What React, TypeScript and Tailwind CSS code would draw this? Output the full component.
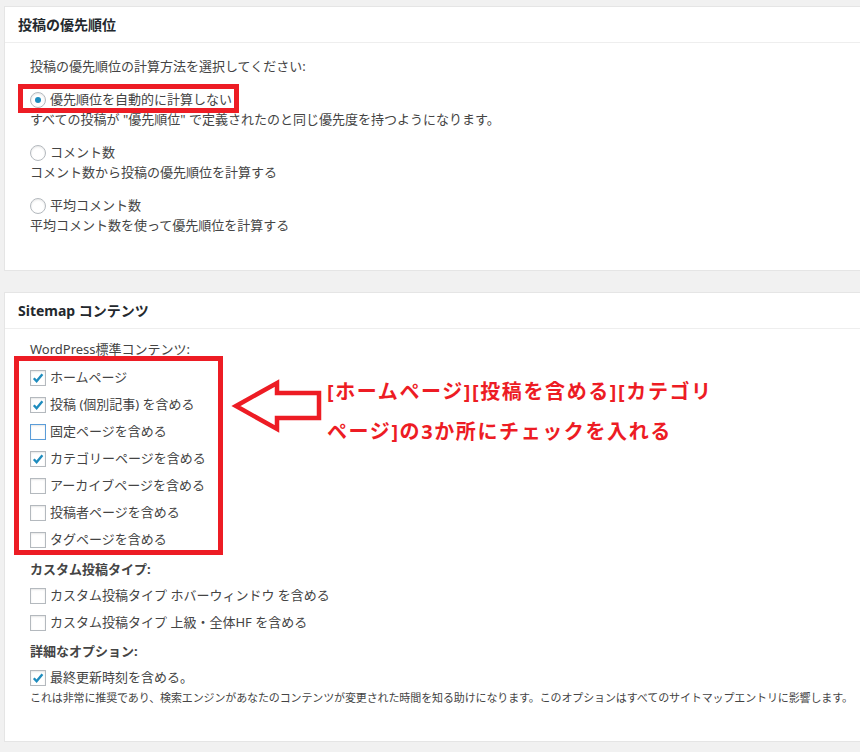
import React from "react";

const font = { fontFamily: "'Noto Sans', 'Noto Sans CJK JP', sans-serif" };

function Radio({ checked, label }: { checked?: boolean; label: string }) {
  return (
    <div className="flex h-[20px] items-center">
      <span className="flex h-4 w-4 items-center justify-center rounded-full border border-[#b4b9be] bg-white shadow-[inset_0_1px_2px_rgba(0,0,0,0.1)]">
        {checked && <span className="h-[6px] w-[6px] rounded-full bg-[#1e8cbe]" />}
      </span>
      <span className="ml-[4px]">{label}</span>
    </div>
  );
}

function Check({ checked, focus, label, h = "h-[27px]" }: { checked?: boolean; focus?: boolean; label: string; h?: string }) {
  return (
    <div className={`flex items-center ${h}`}>
      <span
        className={`flex h-4 w-4 items-center justify-center border bg-white shadow-[inset_0_1px_2px_rgba(0,0,0,0.1)] ${
          focus ? "border-[#5b9dd9] shadow-[0_0_2px_rgba(30,140,190,0.8)]" : "border-[#b4b9be]"
        }`}
      >
        {checked && (
          <svg width="14" height="14" viewBox="0 0 14 14">
            <path d="M2.8 7.2 L5.6 10.2 L11.4 3.2" fill="none" stroke="#1e8cbe" strokeWidth="2.4" />
          </svg>
        )}
      </span>
      <span className="ml-[4px]">{label}</span>
    </div>
  );
}

export default function App() {
  return (
    <div className="relative h-[752px] w-[860px] overflow-hidden bg-[#f1f1f1] pl-[4px] pt-[6px] text-[13px] text-[#444]" style={font}>
      {/* 投稿の優先順位 */}
      <div className="w-[880px] border border-[#e5e5e5] bg-white">
        <div className="flex h-[36px] items-center border-b border-[#eee] pl-[13px] text-[14px] font-bold text-[#23282d]">
          投稿の優先順位
        </div>
        <div className="pb-[35px] pl-[25px] pt-[14px]">
          <div className="flex h-[20px] items-center">投稿の優先順位の計算方法を選択してください:</div>
          <div className="mt-[13px]">
            <Radio checked label="優先順位を自動的に計算しない" />
          </div>
          <div className="flex h-[19px] items-center">すべての投稿が "優先順位" で定義されたのと同じ優先度を持つようになります。</div>
          <div className="mt-[14px]">
            <Radio label="コメント数" />
          </div>
          <div className="flex h-[19px] items-center">コメント数から投稿の優先順位を計算する</div>
          <div className="mt-[14px]">
            <Radio label="平均コメント数" />
          </div>
          <div className="flex h-[19px] items-center">平均コメント数を使って優先順位を計算する</div>
        </div>
      </div>

      {/* Sitemap コンテンツ */}
      <div className="mt-[21px] w-[880px] border border-[#e5e5e5] bg-white">
        <div className="flex h-[36px] items-center border-b border-[#eee] pl-[13px] text-[14px] font-bold text-[#23282d]">
          Sitemap コンテンツ
        </div>
        <div className="pb-[36px] pl-[25px] pt-[11px]">
          <div className="flex h-[20px] items-center">WordPress標準コンテンツ:</div>
          <div className="mt-[4px]">
            <Check checked label="ホームページ" />
            <Check checked label="投稿 (個別記事) を含める" />
            <Check focus label="固定ページを含める" />
            <Check checked label="カテゴリーページを含める" />
            <Check label="アーカイブページを含める" />
            <Check label="投稿者ページを含める" />
            <Check label="タグページを含める" />
          </div>
          <div className="mt-[7px] flex h-[20px] items-center font-bold">カスタム投稿タイプ:</div>
          <div className="mt-[2px]">
            <Check label="カスタム投稿タイプ ホバーウィンドウ を含める" />
            <Check label="カスタム投稿タイプ 上級・全体HF を含める" />
          </div>
          <div className="mt-[6px] flex h-[20px] items-center font-bold">詳細なオプション:</div>
          <div className="mt-[3px]">
            <Check checked label="最終更新時刻を含める。" h="h-[25px]" />
          </div>
          <div className="h-[15px] whitespace-nowrap text-[11px] leading-[15px] tracking-[-0.12px]">
            これは非常に推奨であり、検索エンジンがあなたのコンテンツが変更された時間を知る助けになります。このオプションはすべてのサイトマップエントリに影響します。
          </div>
        </div>
      </div>

      {/* annotations */}
      <div className="absolute left-[18px] top-[84px] h-[29px] w-[221px] border-[5px] border-[#ed1c24]" />
      <div className="absolute left-[14px] top-[356px] h-[199px] w-[209px] border-[5px] border-[#ed1c24]" />
      <svg className="absolute left-[226px] top-[376px]" width="100" height="60" viewBox="226 376 100 60">
        <polygon
          points="236,406 277,383 277,393 319,393 319,418 277,418 277,429"
          fill="none"
          stroke="#ed1c24"
          strokeWidth="4.5"
          strokeLinejoin="miter"
        />
      </svg>
      <div className="absolute left-[327px] top-[372px] whitespace-nowrap text-[20px] font-bold leading-[40px] tracking-[1.6px] text-[#ed1c24]">
        [ホームページ][投稿を含める][カテゴリ
        <br />
        ページ]の3か所にチェックを入れる
      </div>
    </div>
  );
}
